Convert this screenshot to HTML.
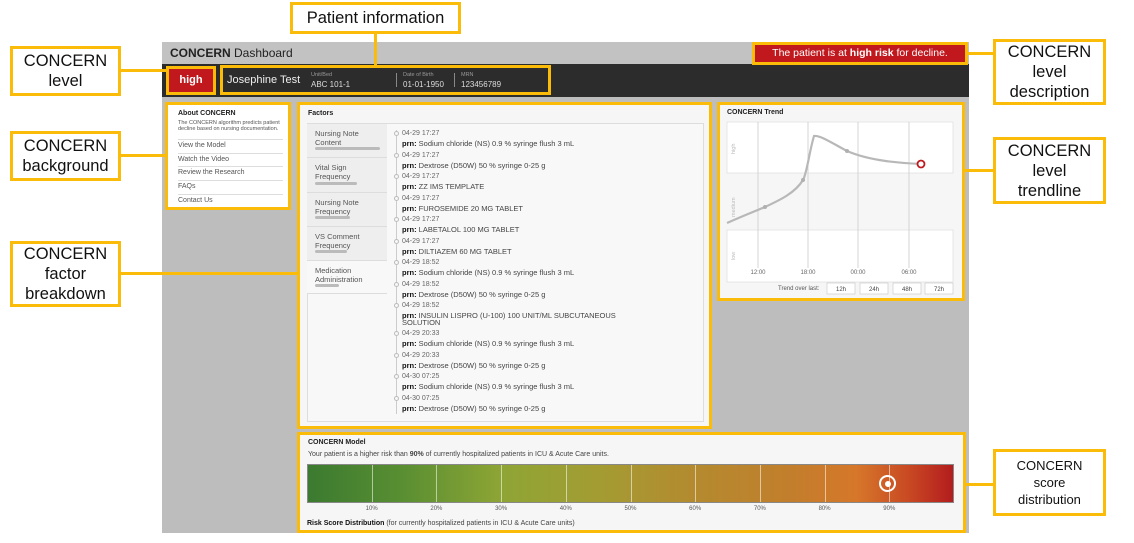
<!DOCTYPE html>
<html><head><meta charset="utf-8"><style>
*{margin:0;padding:0;box-sizing:border-box}
body{width:1134px;height:543px;background:#fff;position:relative;overflow:hidden;font-family:"Liberation Sans",sans-serif;color:#333}
.a{position:absolute}
.ann{position:absolute;border:3px solid #fbbc09;background:#fff;color:#111;font-size:16.5px;line-height:20px;text-align:center;display:flex;align-items:center;justify-content:center}
.y{position:absolute;border:3px solid #fbbc09}
.ln{position:absolute;background:#fbbc09}
.t{position:absolute;font-size:7px;color:#666;white-space:nowrap}
.p{position:absolute;font-size:7.5px;color:#444;white-space:nowrap}
.p b{color:#111}
.tab{position:absolute;left:307px;width:80px;background:#eee;border-bottom:1px solid #ddd;font-size:7.5px;color:#555;padding:5px 0 0 8px;line-height:9px}
.tab i{position:absolute;left:8px;height:3px;background:#bbb;border-radius:2px}
</style></head><body>
<div class="a" style="left:162px;top:42px;width:807px;height:491px;background:#bdbdbd"></div>
<div class="a" style="left:162px;top:42px;width:807px;height:22px;background:#c2c2c2"></div>
<div class="a" style="left:170px;top:46px;font-size:12px;color:#222"><b>CONCERN</b> Dashboard</div>
<div class="a" style="left:162px;top:64px;width:807px;height:33px;background:#2c2c2c"></div>
<div class="a" style="left:752px;top:42px;width:216px;height:23px;background:#c0181d;border:3px solid #fbbc09;color:#fff;font-size:10.5px;line-height:17px;text-align:center">The patient is at <b>high risk</b> for decline.</div>
<div class="a" style="left:166px;top:66px;width:50px;height:29px;border:3px solid #fbbc09;background:#c0181d;color:#fff;font-weight:bold;font-size:11px;text-align:center;line-height:23px">high</div>
<div class="y" style="left:220px;top:65px;width:331px;height:30px"></div>
<div class="a" style="left:227px;top:74px;color:#eee;font-size:11px">Josephine Test</div>
<div class="a" style="left:311px;top:72px;color:#999;font-size:5.5px">Unit/Bed</div>
<div class="a" style="left:311px;top:80px;color:#ddd;font-size:8px">ABC 101-1</div>
<div class="a" style="left:396px;top:73px;width:1px;height:14px;background:#888"></div>
<div class="a" style="left:403px;top:72px;color:#999;font-size:5.5px">Date of Birth</div>
<div class="a" style="left:403px;top:80px;color:#ddd;font-size:8px">01-01-1950</div>
<div class="a" style="left:454px;top:73px;width:1px;height:14px;background:#888"></div>
<div class="a" style="left:461px;top:72px;color:#999;font-size:5.5px">MRN</div>
<div class="a" style="left:461px;top:80px;color:#ddd;font-size:8px">123456789</div>

<div class="y" style="left:165px;top:102px;width:126px;height:108px;background:#fff"></div>
<div class="a" style="left:178px;top:110px;font-size:7px;font-weight:bold;color:#222">About CONCERN</div>
<div class="a" style="left:178px;top:121px;font-size:5.5px;color:#555;line-height:5.5px;width:105px">The CONCERN algorithm predicts patient decline based on nursing documentation.</div>
<div class="a" style="left:178px;top:139px;width:105px;font-size:7px;color:#555;line-height:12.7px">
<div style="border-top:1px solid #ddd">View the Model</div><div style="border-top:1px solid #ddd">Watch the Video</div><div style="border-top:1px solid #ddd">Review the Research</div><div style="border-top:1px solid #ddd">FAQs</div><div style="border-top:1px solid #ddd">Contact Us</div></div>

<div class="y" style="left:297px;top:102px;width:415px;height:327px;background:#f6f6f6"></div>
<div class="a" style="left:308px;top:110px;font-size:7px;font-weight:bold;color:#222">Factors</div>
<div class="a" style="left:307px;top:123px;width:397px;height:299px;border:1px solid #ddd;background:#f8f8f8"></div>
<div class="tab" style="top:124px;height:34px">Nursing Note<br>Content<i style="top:23px;width:65px"></i></div>
<div class="tab" style="top:158px;height:35px">Vital Sign<br>Frequency<i style="top:24px;width:42px"></i></div>
<div class="tab" style="top:193px;height:34px">Nursing Note<br>Frequency<i style="top:23px;width:35px"></i></div>
<div class="tab" style="top:227px;height:34px">VS Comment<br>Frequency<i style="top:23px;width:32px"></i></div>
<div class="tab" style="top:261px;height:33px;background:#f8f8f8">Medication<br>Administration<i style="top:23px;width:24px"></i></div>
<div class="a" style="left:396px;top:130px;width:1px;height:284px;background:#ccc"></div>
<div id="tl"></div>

<div class="y" style="left:717px;top:102px;width:248px;height:199px;background:#f6f6f6"></div>
<div class="a" style="left:727px;top:109px;font-size:7px;font-weight:bold;color:#222">CONCERN Trend</div>
<svg class="a" style="left:720px;top:118px" width="240" height="180">
<rect x="7" y="4" width="226" height="51" fill="#fff" stroke="#ddd" stroke-width=".7"/>
<rect x="7" y="112" width="226" height="52" fill="#fff" stroke="#ddd" stroke-width=".7"/>
<g stroke="#ccc" stroke-width=".8"><line x1="38" y1="4" x2="38" y2="150"/><line x1="88" y1="4" x2="88" y2="150"/><line x1="138" y1="4" x2="138" y2="150"/><line x1="189" y1="4" x2="189" y2="150"/></g>
<g font-size="5.5" fill="#bbb" font-family="Liberation Sans"><text transform="translate(15 36) rotate(-90)">high</text><text transform="translate(15 99) rotate(-90)">medium</text><text transform="translate(15 142) rotate(-90)">low</text></g>
<path d="M7 105 C25 97 38 92 45 89 C60 82 75 75 83 62 C87 55 89 35 94 18 C100 17 112 25 127 33 C150 43 180 45 201 46" fill="none" stroke="#b8b8b8" stroke-width="2.2"/>
<circle cx="45" cy="89" r="2" fill="#b0b0b0"/><circle cx="83" cy="62" r="2" fill="#b0b0b0"/><circle cx="127" cy="33" r="2" fill="#b0b0b0"/>
<circle cx="201" cy="46" r="3.5" fill="#fff" stroke="#c0181d" stroke-width="1.8"/>
<g font-size="6" fill="#666" font-family="Liberation Sans" text-anchor="middle"><text x="38" y="156">12:00</text><text x="88" y="156">18:00</text><text x="138" y="156">00:00</text><text x="189" y="156">06:00</text></g>
<text x="58" y="172" font-size="6" fill="#555" font-family="Liberation Sans">Trend over last:</text>
<g fill="#fff" stroke="#ccc" stroke-width=".7"><rect x="107" y="165" width="28" height="11"/><rect x="140" y="165" width="28" height="11"/><rect x="173" y="165" width="28" height="11"/><rect x="205" y="165" width="28" height="11"/></g>
<g font-size="6" fill="#444" font-family="Liberation Sans" text-anchor="middle"><text x="121" y="173">12h</text><text x="154" y="173">24h</text><text x="187" y="173">48h</text><text x="219" y="173">72h</text></g>
</svg>

<div class="y" style="left:297px;top:432px;width:669px;height:101px;background:#f6f6f6"></div>
<div class="a" style="left:308px;top:439px;font-size:7px;font-weight:bold;color:#222">CONCERN Model</div>
<div class="a" style="left:308px;top:451px;font-size:7px;color:#444">Your patient is a higher risk than <b>90%</b> of currently hospitalized patients in ICU &amp; Acute Care units.</div>
<div class="a" style="left:307px;top:464px;width:647px;height:39px;border:1px solid #888;background:linear-gradient(90deg,#3b7a30 0%,#5a8f32 15%,#8ea535 30%,#a39c33 45%,#b48a2f 60%,#c27e2c 75%,#d6772a 85%,#c94a23 93%,#b31c1e 100%)"></div>
<div id="bar"></div>
<div class="a" style="left:879px;top:475px;width:17px;height:17px;border:2.5px solid #fff;border-radius:50%"></div>
<div class="a" style="left:884.5px;top:480.5px;width:6px;height:6px;background:#fff;border-radius:50%"></div>
<div class="a" style="left:307px;top:520px;font-size:7px;color:#444"><b style="color:#111">Risk Score Distribution</b> (for currently hospitalized patients in ICU &amp; Acute Care units)</div>

<div class="ann" style="left:290px;top:2px;width:171px;height:32px">Patient information</div>
<div class="ln" style="left:374px;top:34px;width:3px;height:31px"></div>
<div class="ann" style="left:10px;top:46px;width:111px;height:50px">CONCERN<br>level</div>
<div class="ln" style="left:121px;top:69px;width:45px;height:3px"></div>
<div class="ann" style="left:10px;top:131px;width:111px;height:50px">CONCERN<br>background</div>
<div class="ln" style="left:121px;top:154px;width:44px;height:3px"></div>
<div class="ann" style="left:10px;top:241px;width:111px;height:66px">CONCERN<br>factor<br>breakdown</div>
<div class="ln" style="left:121px;top:272px;width:176px;height:3px"></div>
<div class="ann" style="left:993px;top:39px;width:113px;height:66px">CONCERN<br>level<br>description</div>
<div class="ln" style="left:968px;top:52px;width:25px;height:3px"></div>
<div class="ann" style="left:993px;top:137px;width:113px;height:67px">CONCERN<br>level<br>trendline</div>
<div class="ln" style="left:965px;top:169px;width:28px;height:3px"></div>
<div class="ann" style="left:993px;top:449px;width:113px;height:67px;font-size:13px;line-height:17px">CONCERN<br>score<br>distribution</div>
<div class="ln" style="left:966px;top:483px;width:27px;height:3px"></div>

<script>
var d=[["04-29 17:27","Sodium chloride (NS) 0.9 % syringe flush 3 mL"],["04-29 17:27","Dextrose (D50W) 50 % syringe 0-25 g"],["04-29 17:27","ZZ IMS TEMPLATE"],["04-29 17:27","FUROSEMIDE 20 MG TABLET"],["04-29 17:27","LABETALOL 100 MG TABLET"],["04-29 17:27","DILTIAZEM 60 MG TABLET"],["04-29 18:52","Sodium chloride (NS) 0.9 % syringe flush 3 mL"],["04-29 18:52","Dextrose (D50W) 50 % syringe 0-25 g"],["04-29 18:52","INSULIN LISPRO (U-100) 100 UNIT/ML SUBCUTANEOUS<br>SOLUTION"],["04-29 20:33","Sodium chloride (NS) 0.9 % syringe flush 3 mL"],["04-29 20:33","Dextrose (D50W) 50 % syringe 0-25 g"],["04-30 07:25","Sodium chloride (NS) 0.9 % syringe flush 3 mL"],["04-30 07:25","Dextrose (D50W) 50 % syringe 0-25 g"]];
var tops=[130,152,173,195,216,238,259,281,302,330,352,373,395],h="";
d.forEach(function(e,i){var t=tops[i];h+='<div class="a" style="left:394px;top:'+(t+1)+'px;width:5px;height:5px;border:1px solid #bbb;border-radius:50%;background:#f8f8f8"></div><div class="t" style="left:402px;top:'+t+'px">'+e[0]+'</div><div class="p" style="left:402px;top:'+(t+10)+'px;line-height:7px">'+'<b>prn:</b> '+e[1]+'</div>';});
document.getElementById("tl").innerHTML=h;
var b="";for(var i=1;i<10;i++){var x=307+647*i/10;b+='<div class="a" style="left:'+x+'px;top:465px;width:1px;height:37px;background:rgba(255,255,255,.55)"></div><div class="a" style="left:'+(x-10)+'px;top:506px;width:20px;text-align:center;font-size:6px;color:#555">'+(i*10)+'%</div>';}
document.getElementById("bar").innerHTML=b;
</script>
</body></html>
